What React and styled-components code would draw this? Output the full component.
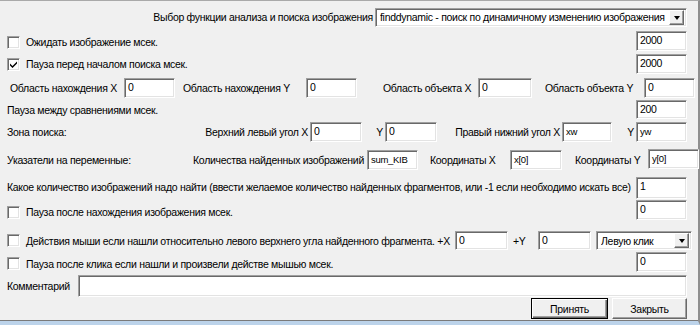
import React from 'react'
import styled, { createGlobalStyle, css } from 'styled-components'

const Global = createGlobalStyle`
	html, body {
		margin: 0;
		padding: 0;
		background: #f0f0f0;
	}
	* {
		box-sizing: border-box;
	}
`

const Window = styled.div`
	width: 700px;
	height: 325px;
	background: #f0f0f0;
	border-top: 1px solid #a9a9a9;
	border-right: 2px solid #8e8e8e;
	border-bottom: 4px solid #bcd3ea;
	padding: 4px 11px 0 7px;
	font-family: "Liberation Sans", Arial, sans-serif;
	font-size: 10.5px;
	letter-spacing: -0.3px;
	color: #000;
	display: flex;
	flex-direction: column;
	position: relative;
	&::after {
		content: '';
		position: absolute;
		left: 0;
		right: 0;
		bottom: 0;
		height: 1px;
		background: #7a7a7a;
	}
`

const Row = styled.div`
	display: flex;
	align-items: center;
	height: ${p => p.$h || 20}px;
	margin-top: ${p => p.$mt || 3}px;
	flex-shrink: 0;
`

const Label = styled.span`
	white-space: nowrap;
	flex-shrink: 0;
	width: ${p => (p.$w ? p.$w + 'px' : 'auto')};
	margin-left: ${p => p.$ml || 0}px;
	margin-top: ${p => p.$mt || 0}px;
	text-align: ${p => p.$right ? 'right' : 'left'};
	padding-right: ${p => p.$right ? 2 : 0}px;
`

const Spacer = styled.div`
	flex: 1;
`

const sunken = css`
	background: #fff;
	border-top: 1px solid #a0a0a0;
	border-left: 1px solid #a0a0a0;
	border-right: 1px solid #fff;
	border-bottom: 1px solid #fff;
	box-shadow: inset 1px 1px 0 #696969, inset -1px -1px 0 #e3e3e3;
`

const Field = styled.div`
	${sunken}
	width: ${p => p.$w || 51}px;
	height: ${p => p.$h || 20}px;
	margin-left: ${p => p.$ml || 0}px;
	align-self: ${p => p.$self || 'center'};
	flex-shrink: 0;
	padding: 2px 0 0 3px;
	font-size: ${p => p.$small ? 9.5 : 10.5}px;
	line-height: 13px;
	white-space: nowrap;
	overflow: hidden;
`

const Select = styled.div`
	${sunken}
	width: ${p => p.$w}px;
	height: 19px;
	margin-left: ${p => p.$ml || 0}px;
	flex-shrink: 0;
	display: flex;
	align-items: center;
	padding: 0 2px 0 4px;
	white-space: nowrap;
`

const SelectText = styled.span`
	flex: 1;
	overflow: hidden;
`

const Arrow = styled.div`
	width: 15px;
	height: 15px;
	background: #f0f0f0;
	border-top: 1px solid #fff;
	border-left: 1px solid #fff;
	border-right: 1px solid #696969;
	border-bottom: 1px solid #696969;
	box-shadow: inset -1px -1px 0 #a0a0a0;
	display: flex;
	align-items: center;
	justify-content: center;
	&::before {
		content: '';
		border-left: 3.5px solid transparent;
		border-right: 3.5px solid transparent;
		border-top: 4px solid #000;
		margin-top: 1px;
	}
`

const Box = styled.div`
	${sunken}
	width: 13px;
	height: 13px;
	flex-shrink: 0;
	margin-right: 6px;
	margin-top: ${p => p.$mt || 0}px;
	display: flex;
	align-items: center;
	justify-content: center;
`

const Check = ({ checked, mt }) => (
	<Box $mt={mt}>
		{checked && (
			<svg width="9" height="9" viewBox="0 0 9 9">
				<path d="M1 3.5 L3.5 6 L8 1.5 L8 3.5 L3.5 8 L1 5.5 Z" fill="#000" />
			</svg>
		)}
	</Box>
)

const Button = styled.div`
	width: ${p => p.$w}px;
	height: 21px;
	margin-left: ${p => p.$ml || 0}px;
	display: flex;
	align-items: center;
	justify-content: center;
	background: #f0f0f0;
	flex-shrink: 0;
	${p => p.$default ? css`
		border: 1px solid #000;
		box-shadow: inset 1px 1px 0 #fff, inset -1px -1px 0 #696969, inset -2px -2px 0 #a0a0a0;
	` : css`
		border-top: 1px solid #fff;
		border-left: 1px solid #fff;
		border-right: 1px solid #696969;
		border-bottom: 1px solid #696969;
		box-shadow: inset -1px -1px 0 #a0a0a0;
	`}
`

const App = () => (
	<>
		<Global />
		<Window>
			<Row $h={18} $mt={0}>
				<Label $w={368} $right>Выбор функции анализа и поиска изображения</Label>
				<Select $w={312}>
					<SelectText>finddynamic - поиск по динамичному изменению изображения</SelectText>
					<Arrow />
				</Select>
			</Row>
			<Row $h={20} $mt={5}>
				<Check mt={2} />
				<Label $mt={2}>Ожидать изображение мсек.</Label>
				<Spacer />
				<Field>2000</Field>
			</Row>
			<Row $h={20} $mt={3}>
				<Check checked />
				<Label>Пауза перед началом поиска мсек.</Label>
				<Spacer />
				<Field>2000</Field>
			</Row>
			<Row $h={20} $mt={4}>
				<Label $w={114} $ml={3}>Область нахождения X</Label>
				<Field>0</Field>
				<Label $w={123} $ml={8}>Область нахождения Y</Label>
				<Field $w={51}>0</Field>
				<Label $w={95} $ml={26}>Область объекта X</Label>
				<Field $w={54}>0</Field>
				<Label $w={99} $ml={13}>Область объекта Y</Label>
				<Field>0</Field>
			</Row>
			<Row $h={19} $mt={2}>
				<Label>Пауза между сравнениями мсек.</Label>
				<Spacer />
				<Field $h={19}>200</Field>
			</Row>
			<Row $h={20} $mt={3}>
				<Label $w={120}>Зона поиска:</Label>
				<Label $w={183} $right>Верхний левый угол X</Label>
				<Field $w={52}>0</Field>
				<Label $w={23} $right>Y</Label>
				<Field $w={52}>0</Field>
				<Label $w={125} $right>Правый нижний угол X</Label>
				<Field $w={50} $small>xw</Field>
				<Label $w={24} $right>Y</Label>
				<Field $small>yw</Field>
			</Row>
			<Row $h={21} $mt={7}>
				<Label $w={186}>Указатели на переменные:</Label>
				<Label $w={174}>Количества найденных изображений</Label>
				<Field $w={51} $small>sum_KIB</Field>
				<Label $w={80} $ml={12}>Координаты X</Label>
				<Field $w={52} $small>x[0]</Field>
				<Label $w={73} $ml={13}>Координаты Y</Label>
				<Field $self="flex-start" $small>y[0]</Field>
			</Row>
			<Row $h={22} $mt={7}>
				<Label $mt={-3}>Какое количество изображений надо найти (ввести желаемое количество найденных фрагментов, или -1 если необходимо искать все)</Label>
				<Spacer />
				<Field $h={22}>1</Field>
			</Row>
			<Row $h={20} $mt={1}>
				<Check mt={5} />
				<Label $mt={4}>Пауза после нахождения изображения мсек.</Label>
				<Spacer />
				<Field $self="flex-start">0</Field>
			</Row>
			<Row $h={19} $mt={11}>
				<Check />
				<Label $w={429}>Действия мыши если нашли относительно левого верхнего угла найденного фрагмента. +X</Label>
				<Field $w={53} $h={19}>0</Field>
				<Label $w={25} $ml={5}>+Y</Label>
				<Field $w={53} $h={19}>0</Field>
				<Select $w={96} $ml={5}>
					<SelectText>Левую клик</SelectText>
					<Arrow />
				</Select>
			</Row>
			<Row $h={20} $mt={2}>
				<Check mt={3} />
				<Label $mt={3}>Пауза после клика если нашли и произвели действе мышью мсек.</Label>
				<Spacer />
				<Field>0</Field>
			</Row>
			<Row $h={22} $mt={3}>
				<Label $w={71}>Комментарий</Label>
				<Field $w={609} $h={22} />
			</Row>
			<Row $h={21} $mt={1}>
				<Spacer />
				<Button $w={77} $default>Принять</Button>
				<Button $w={75} $ml={4}>Закрыть</Button>
			</Row>
		</Window>
	</>
)

export default App
